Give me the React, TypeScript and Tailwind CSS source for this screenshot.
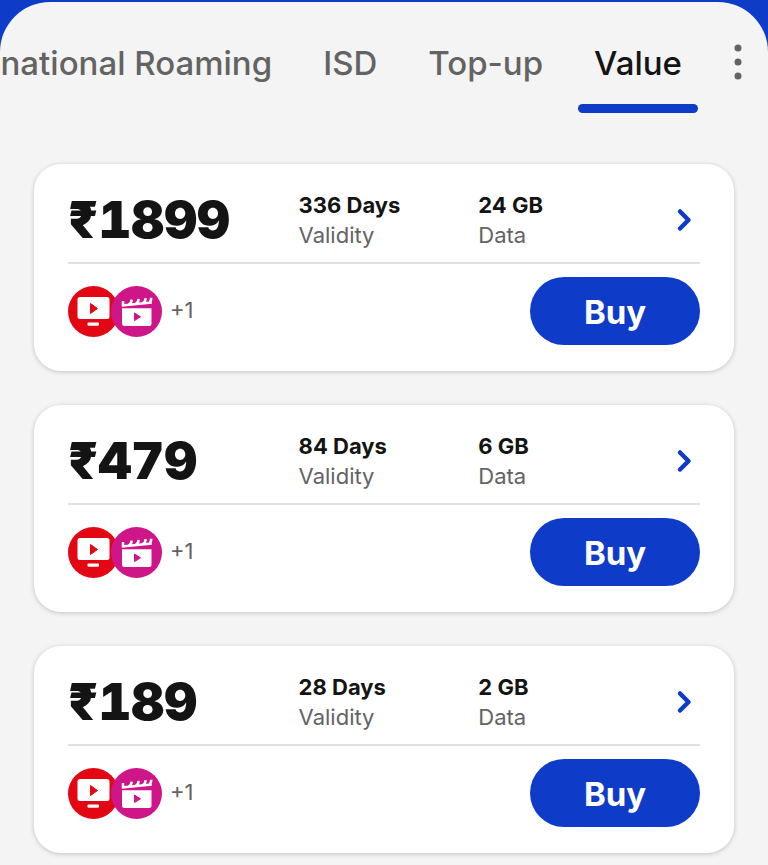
interface Plan {
  price: number;
  validity: string;
  data: string;
  extra: number;
}

const plans: Plan[] = [
  { price: 1899, validity: "336 Days", data: "24 GB", extra: 1 },
  { price: 479, validity: "84 Days", data: "6 GB", extra: 1 },
  { price: 189, validity: "28 Days", data: "2 GB", extra: 1 },
];

const tabs = ["International Roaming", "ISD", "Top-up", "Value"];

function TvIcon() {
  return (
    <svg viewBox="0 0 51 51" className="size-[51px] shrink-0" aria-hidden="true">
      <circle cx="25.5" cy="25.5" r="25.5" fill="#e30613" />
      <rect x="9.5" y="11" width="32" height="22" rx="2.5" fill="#fff" />
      <path d="M22.5 17.5v10l7-5z" fill="#e30613" stroke="#e30613" strokeWidth="1" strokeLinejoin="round" />
      <rect x="19.5" y="36.5" width="11.5" height="3.2" rx="1" fill="#fff" />
    </svg>
  );
}

function MovieIcon() {
  return (
    <svg viewBox="0 0 51 51" className="-ml-2 size-[51px] shrink-0" aria-hidden="true">
      <circle cx="25.5" cy="25.5" r="25.5" fill="#cf1689" />
      <path
        d="M10.8 19.6 40.8 16.6M12 19.8V15M17.5 18.6c2.2-.8 3-2.6 3.2-5M24.500 17.900c2.200-.8 3-2.600 3.200-5M31.500 17.200c2.200-.8 3-2.600 3.200-5M38 16.800c1.600-.8 2.200-2.600 2.200-5"
        fill="none"
        stroke="#fff"
        strokeWidth="2.5"
      />
      <path d="M11 22.3h29.5v15.200a2.500 2.500 0 0 1-2.500 2.500H13.500a2.500 2.500 0 0 1-2.500-2.500z" fill="#fff" />
      <path d="M23.500 27v7.600l6-3.800z" fill="#cf1689" stroke="#cf1689" strokeWidth="1" strokeLinejoin="round" />
    </svg>
  );
}

function PlanCard({ plan }: { plan: Plan }) {
  return (
    <article className="rounded-[27px] bg-white px-[34px] pb-[26px] shadow-[0_1px_5px_rgba(0,0,0,0.2)]">
      <div className="grid h-[100px] grid-cols-[231fr_180fr_190fr_auto] items-center border-b-2 border-[#e0e0e0] pt-[14px]">
        <h2 className="text-[51px] leading-[60px] font-black text-[#141414] tabular-nums">
          ₹{plan.price}
        </h2>
        <p className="flex flex-col text-[22px] leading-[30px] text-[#636363]">
          <strong className="font-bold text-[#141414]">{plan.validity}</strong>
          Validity
        </p>
        <p className="flex flex-col text-[22px] leading-[30px] text-[#636363]">
          <strong className="font-bold text-[#141414]">{plan.data}</strong>
          Data
        </p>
        <button type="button" aria-label={`Details of ₹${plan.price} plan`} className="flex w-8 justify-center">
          <svg viewBox="0 0 16 24" className="h-6 w-4" fill="none" aria-hidden="true">
            <path d="m4 3.5 8.5 8.500L4 20.500" stroke="#0f3bc9" strokeWidth="4.500" strokeLinecap="round" strokeLinejoin="round" />
          </svg>
        </button>
      </div>
      <div className="flex items-center pt-[13px]">
        <TvIcon />
        <MovieIcon />
        <span className="mb-0.5 ml-2 text-[22px] leading-7 text-[#636363]">+{plan.extra}</span>
        <button
          type="button"
          className="ml-auto h-[68px] w-[170px] rounded-full bg-[#0f3bc9] pt-0.5 text-[33px] leading-10 font-bold text-white"
        >
          Buy
        </button>
      </div>
    </article>
  );
}

export default function App() {
  return (
    <div className="min-h-screen overflow-hidden bg-[#0f3bc9] pt-0.5 font-['Inter','Liberation_Sans',sans-serif]">
      <main className="min-h-screen rounded-t-[50px] bg-[#f4f4f4] pb-3">
        <nav className="flex items-start justify-end overflow-hidden pt-10 pr-5">
          <div role="tablist" className="flex shrink-0 gap-[19px]">
            {tabs.map((tab) => {
              const active = tab === "Value";
              return (
                <button
                  key={tab}
                  type="button"
                  role="tab"
                  aria-selected={active}
                  className={`flex flex-col items-center text-[33px] leading-[42px] font-medium whitespace-nowrap ${
                    active ? "text-[#141414]" : "text-[#636363]"
                  }`}
                >
                  <span className="px-4">{tab}</span>
                  {active && <span className="mt-5 h-[9px] w-full rounded-full bg-[#0f3bc9]" />}
                </button>
              );
            })}
          </div>
          <button type="button" aria-label="More options" className="ml-[30px] flex h-10 w-5 shrink-0 justify-center">
            <svg viewBox="0 0 8 40" className="h-10 w-2" fill="#636363" aria-hidden="true">
              <circle cx="4" cy="6" r="3.5" />
              <circle cx="4" cy="20" r="3.5" />
              <circle cx="4" cy="34" r="3.5" />
            </svg>
          </button>
        </nav>
        <section className="mt-[51px] flex flex-col gap-[34px] px-[34px]">
          {plans.map((plan) => (
            <PlanCard key={plan.price} plan={plan} />
          ))}
        </section>
      </main>
    </div>
  );
}
